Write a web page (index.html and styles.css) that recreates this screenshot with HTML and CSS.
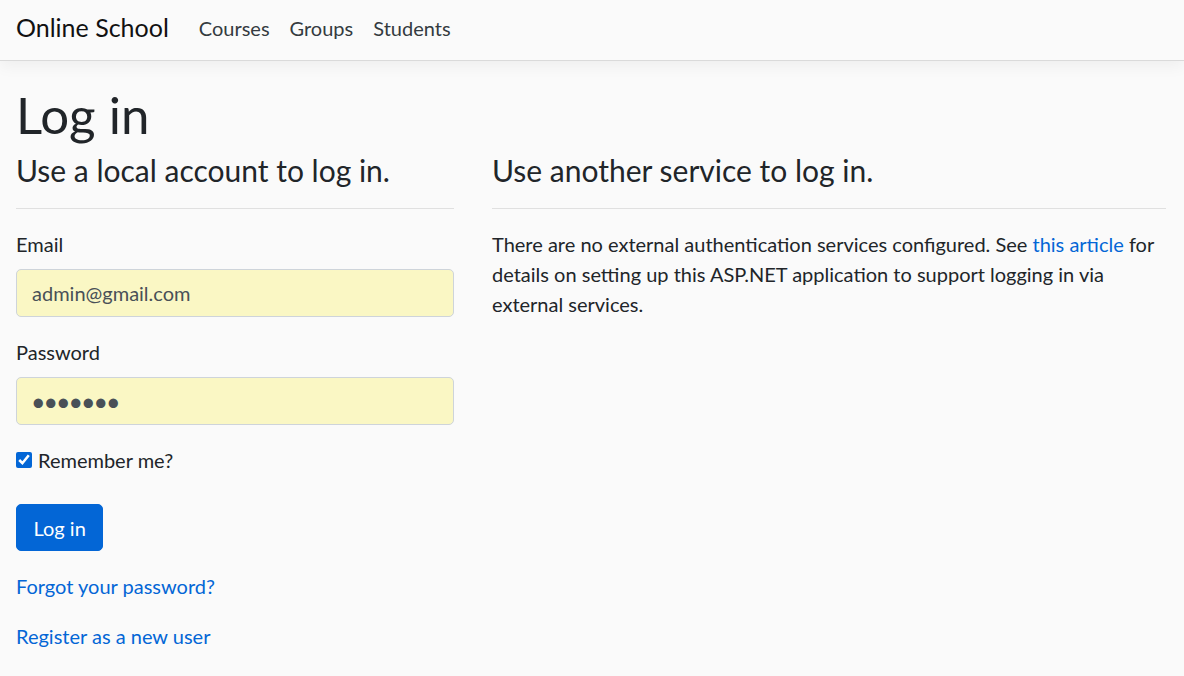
FILE: index.html
```html
<!DOCTYPE html>
<html lang="en">
<head>
<meta charset="utf-8">
<title>Log in - Online School</title>
<link rel="stylesheet" href="styles.css">
</head>
<body>
<header class="site-header">
  <a class="brand" href="#">Online School</a>
  <nav class="nav">
    <a class="nav-link" href="#">Courses</a>
    <a class="nav-link" href="#">Groups</a>
    <a class="nav-link" href="#">Students</a>
  </nav>
</header>
<main class="container">
  <h1 class="page-title">Log in</h1>
  <div class="row">
    <section class="col-local">
      <h4 class="section-title">Use a local account to log in.</h4>
      <hr class="divider">
      <form class="login-form">
        <div class="form-group">
          <label class="form-label" for="email">Email</label>
          <input class="form-control" id="email" type="email" value="admin@gmail.com">
        </div>
        <div class="form-group">
          <label class="form-label" for="password">Password</label>
          <input class="form-control password" id="password" type="password" value="1234567">
        </div>
        <div class="form-group check-group">
          <label class="check-label"><input class="check" type="checkbox" checked>Remember me?</label>
        </div>
        <div class="form-group">
          <button class="btn-primary" type="button">Log in</button>
        </div>
        <p class="link-line"><a class="link" href="#">Forgot your password?</a></p>
        <p class="link-line"><a class="link" href="#">Register as a new user</a></p>
      </form>
    </section>
    <section class="col-external">
      <h4 class="section-title">Use another service to log in.</h4>
      <hr class="divider">
      <p class="info">There are no external authentication services configured. See <a class="link" href="#">this article</a> for details on setting up this ASP.NET application to support logging in via external services.</p>
    </section>
  </div>
</main>
</body>
</html>
```
FILE: styles.css
```css
* { box-sizing: border-box; }

html, body {
  margin: 0;
  background: #fafafa;
}

body {
  font-family: Lato, "Liberation Sans", sans-serif;
  font-size: 20px;
  line-height: 1.5;
  color: #212529;
}

.site-header {
  height: 61px;
  display: flex;
  align-items: center;
  padding: 0 16px 4px;
  background: #fafafa;
  border-bottom: 1px solid #dadada;
  box-shadow: 0 5px 15px rgba(0, 0, 0, 0.05);
}

.brand {
  font-size: 25px;
  color: #111;
  text-decoration: none;
  margin-right: 20px;
  line-height: 1.5;
}

.nav {
  display: flex;
}

.nav-link {
  padding: 0 10px;
  color: #343a40;
  text-decoration: none;
}

.container {
  padding: 24px 18px 0 16px;
}

.page-title {
  font-size: 51px;
  font-weight: 400;
  line-height: 1.2;
  margin: -1px 0 7px;
}

.row {
  display: grid;
  grid-template-columns: 438px 674px;
  column-gap: 38px;
}

.section-title {
  font-size: 30px;
  font-weight: 400;
  line-height: 1.2;
  margin: 0;
}

.divider {
  border: 0;
  border-top: 1px solid rgba(0, 0, 0, 0.1);
  margin: 20px 0;
}

.form-group {
  margin-bottom: 20px;
}

.form-label {
  display: inline-block;
  margin-bottom: 10px;
}

.form-control {
  display: block;
  width: 100%;
  height: 48px;
  padding: 7px 15px;
  font-family: inherit;
  font-size: 20px;
  line-height: 1.5;
  color: #495057;
  background: #faf7c4;
  border: 1px solid #ced4da;
  border-radius: 5px;
}

.password {
  font-size: 25px;
  letter-spacing: -2px;
  padding-left: 14px;
}

.check-group {
  margin-bottom: 29px;
}

.check-label {
  display: inline-flex;
  align-items: center;
}

.check {
  width: 16px;
  height: 16px;
  margin: 0 6px 0 0;
  accent-color: #0366d6;
}

.btn-primary {
  font-family: inherit;
  font-size: 20px;
  line-height: 1.5;
  color: #fff;
  background: #0366d6;
  border: 1px solid #0366d6;
  border-radius: 5px;
  padding: 7.5px 16.5px;
  height: 47px;
}

.link-line {
  margin: 0 0 20px;
}

.link {
  color: #0366d6;
  text-decoration: none;
}

.info {
  margin: 0;
}
```
